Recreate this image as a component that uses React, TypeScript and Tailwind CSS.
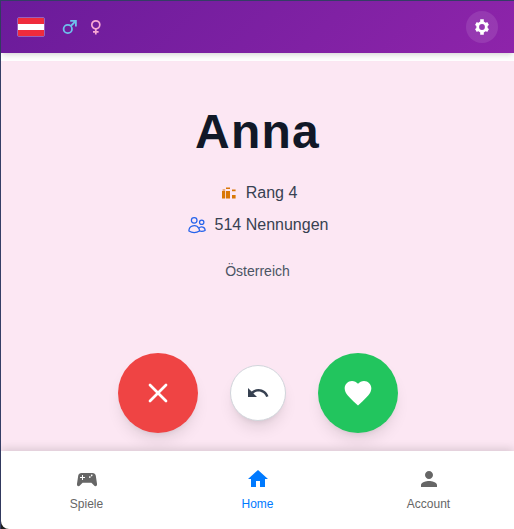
import type { ReactNode } from "react";
import { MdFavorite, MdHome, MdPerson, MdUndo } from "react-icons/md";
import { HiOutlineUsers } from "react-icons/hi2";
import { X } from "lucide-react";

function Flag() {
  return (
    <span role="img" aria-label="Österreich" className="flex h-5 w-7 flex-col overflow-hidden rounded-xs border border-white/30">
      <span className="flex-1 bg-[#ef2b3c]" />
      <span className="flex-1 bg-white" />
      <span className="flex-1 bg-[#ef2b3c]" />
    </span>
  );
}

function Male() {
  return (
    <svg viewBox="0 0 16 16" className="size-4" fill="none" stroke="#6ec1ec" strokeWidth="1.8" aria-hidden="true">
      <circle cx="6.8" cy="10" r="4.2" />
      <path d="M9.8 7 14.600 2.200M9.2 1.900h5.700V7.500" />
    </svg>
  );
}

function Female() {
  return (
    <svg viewBox="0 0 16 16" className="size-4" fill="none" stroke="#f9a8d4" strokeWidth="1.7" aria-hidden="true">
      <circle cx="8.800" cy="5.800" r="4" />
      <path d="M8.800 9.800V15.600M6 12.900h5.600" />
    </svg>
  );
}

function Gear() {
  return (
    <svg viewBox="0 0 18 18" className="size-4.5" fill="none" stroke="currentColor" aria-hidden="true">
      <circle cx="9" cy="9" r="4.3" strokeWidth="2.8" />
      <path
        d="M9 1.2v3M9 13.8v3M2.9 5.5 5 6.7M13 11.3l2.1 1.200M2.900 12.500 5 11.300M13 6.700l2.100-1.200"
        strokeWidth="3.6"
      />
    </svg>
  );
}

function Podium() {
  return (
    <svg viewBox="0 0 20 20" className="size-5" fill="#d97706" aria-hidden="true">
      <path d="M4 8h3.200v7.600H4zM8 8h4v7.600H8zM14 12h3.600v3.600H14zM8 4.400h4v1.600H8zM14 6.600h3.600v1.600H14zM4.600 6.600h2.600v1H4.600z" />
    </svg>
  );
}

function Gamepad() {
  return (
    <svg viewBox="0 0 24 24" className="size-6" fill="currentColor" aria-hidden="true">
      <path
        fillRule="evenodd"
        d="M6.5 6h11C19.3 6 20.400 7 20.800 8.800L22 16.800C22.200 18.300 21.600 19.200 20.600 19.200C19.800 19.200 19.400 18.900 18.900 18.300L16.400 15.800H7.600L5.100 18.300C4.600 18.900 4.200 19.200 3.400 19.200C2.400 19.200 1.800 18.300 2 16.800L3.200 8.800C3.600 7 4.700 6 6.500 6ZM7 8v2H5v1h2v2h1v-2h2v-1H8V8ZM16.700 7.600a.8.8 0 1 0 .01 0ZM14.800 9.300a.8.8 0 1 0 .01 0Z"
      />
    </svg>
  );
}

function Tab({ label, icon, active = false }: { label: string; icon: ReactNode; active?: boolean }) {
  return (
    <a
      href="#"
      aria-current={active ? "page" : undefined}
      className={`flex flex-1 flex-col items-center gap-1 text-xs leading-[18px] ${active ? "text-[#007aff]" : "text-[#666666]"}`}
    >
      {icon}
      {label}
    </a>
  );
}

export default function App() {
  return (
    <div className="flex min-h-screen flex-col border-t border-l border-[#353e66] bg-[#202020] font-['Liberation_Sans',Arial,sans-serif]">
      <header className="relative z-10 flex h-13 items-center justify-between bg-linear-135 from-[#6a1b9a] to-[#8e24aa] px-4 shadow-md">
        <div className="flex items-center gap-3">
          <Flag />
          <div className="flex items-center gap-[2px]">
            <button type="button" aria-label="Männlich" className="px-1"><Male /></button>
            <button type="button" aria-label="Weiblich" className="px-1"><Female /></button>
          </div>
        </div>
        <button type="button" aria-label="Einstellungen" className="flex size-8 items-center justify-center rounded-full bg-white/10 text-white">
          <Gear />
        </button>
      </header>
      <div className="h-2 bg-white" />
      <main className="flex flex-1 flex-col items-center bg-[#fce7f3] pt-10">
        <h1 className="text-5xl leading-[62px] font-bold tracking-wide text-[#111827]">Anna</h1>
        <div className="mt-[18px] flex flex-col items-center gap-2 text-base text-[#374151]">
          <p className="flex items-center gap-2"><Podium />Rang 4</p>
          <p className="flex items-center gap-2"><HiOutlineUsers size={20} className="text-[#2563eb]" />514 Nennungen</p>
        </div>
        <p className="mt-6 text-sm text-[#4b5563]">Österreich</p>
        <div className="mt-auto mb-[18px] flex items-center gap-8">
          <button type="button" aria-label="Ablehnen" className="flex size-20 items-center justify-center rounded-full bg-[#ef4444] text-white shadow-lg">
            <X size={32} />
          </button>
          <button type="button" aria-label="Rückgängig" className="flex size-14 items-center justify-center rounded-full border border-[#d1d5db] bg-white text-[#374151] shadow-lg">
            <svg viewBox="0 0 24 24" className="size-6" fill="currentColor" aria-hidden="true">
              <path d="M12.5 8c-2.650 0-5.050.990-6.900 2.600L2 7v9h9l-3.620-3.620c1.390-1.160 3.160-1.880 5.120-1.880 3.540 0 6.550 2.310 7.600 5.500l2.370-.780C21.080 11.030 17.150 8 12.500 8z" />
            </svg>
          </button>
          <button type="button" aria-label="Gefällt mir" className="flex size-20 items-center justify-center rounded-full bg-[#22c55e] text-white shadow-lg">
            <MdFavorite size={32} />
          </button>
        </div>
      </main>
      <nav className="relative flex items-start rounded-bl-lg bg-white py-4 shadow-[0_-2px_10px_rgba(0,0,0,0.15)]">
        <Tab label="Spiele" icon={<Gamepad />} />
        <Tab label="Home" active icon={<MdHome size={24} />} />
        <Tab label="Account" icon={<MdPerson size={24} />} />
      </nav>
    </div>
  );
}
